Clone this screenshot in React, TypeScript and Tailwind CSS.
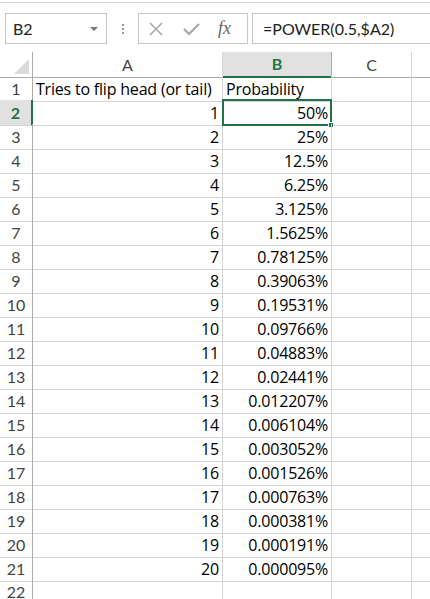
import React from "react";

const FONT = { fontFamily: "Lato, 'Liberation Sans', sans-serif" };
const CELL_FONT = { fontFamily: "'Open Sans', 'Noto Sans', sans-serif" };

const rows: [string, string][] = [
  ["Tries to flip head (or tail)", "Probability"],
  ["1", "50%"],
  ["2", "25%"],
  ["3", "12.5%"],
  ["4", "6.25%"],
  ["5", "3.125%"],
  ["6", "1.5625%"],
  ["7", "0.78125%"],
  ["8", "0.39063%"],
  ["9", "0.19531%"],
  ["10", "0.09766%"],
  ["11", "0.04883%"],
  ["12", "0.02441%"],
  ["13", "0.012207%"],
  ["14", "0.006104%"],
  ["15", "0.003052%"],
  ["16", "0.001526%"],
  ["17", "0.000763%"],
  ["18", "0.000381%"],
  ["19", "0.000191%"],
  ["20", "0.000095%"],
  ["", ""],
];

const cols = "grid-cols-[33px_190px_109px_80px_1fr]";

function FormulaBar() {
  return (
    <div className="h-[50px] border-t border-[#d4d4d4] mt-[2px] flex items-start pt-[10px] pl-[5px]">
      <div className="w-[102px] h-[31px] border border-[#c6c6c6] flex items-center justify-between pl-[7px] pr-[8px]">
        <span className="text-[16px] text-[#222]">B2</span>
        <svg width="8" height="4" viewBox="0 0 8 4">
          <path d="M0 0h8L4 4z" fill="#777" />
        </svg>
      </div>
      <div className="w-[31px] h-[31px] flex flex-col items-center justify-center gap-[2px]">
        <span className="w-[2px] h-[2px] bg-[#999]" />
        <span className="w-[2px] h-[2px] bg-[#999]" />
        <span className="w-[2px] h-[2px] bg-[#999]" />
      </div>
      <div className="w-[110px] h-[31px] border border-[#c6c6c6] flex items-center pl-[10px] gap-[20px]">
        <svg width="14" height="14" viewBox="0 0 14 14">
          <path d="M1 1l12 12M13 1L1 13" stroke="#a8a8a8" strokeWidth="1.6" />
        </svg>
        <svg width="17" height="14" viewBox="0 0 17 14">
          <path d="M1 7l5 5L16 2" stroke="#a8a8a8" strokeWidth="2.2" fill="none" />
        </svg>
        <span className="text-[18px] italic text-[#666] -ml-[2px]" style={{ fontFamily: "'Liberation Serif', serif" }}>
          fx
        </span>
      </div>
      <div className="flex-1 h-[31px] border-t border-b border-l border-[#c6c6c6] ml-[4px] flex items-center pl-[10px]">
        <span className="text-[16px] text-[#222]">=POWER(0.5,$A2)</span>
      </div>
    </div>
  );
}

function HeaderRow() {
  return (
    <div className={`grid ${cols} h-[24px]`}>
      <div className="border-r border-b border-[#ababab] relative">
        <svg className="absolute right-[3px] bottom-[3px]" width="15" height="15" viewBox="0 0 15 15">
          <path d="M15 0v15H0z" fill="#dadada" />
        </svg>
      </div>
      <div className="border-r border-[#d4d4d4] border-b border-b-[#ababab] flex items-center justify-center text-[16px] text-[#444]">A</div>
      <div className="bg-[#e1e1e1] border-r border-[#ababab] border-b-2 border-b-[#217346] flex items-center justify-center text-[16px] font-bold text-[#217346]">B</div>
      <div className="border-r border-[#d4d4d4] border-b border-b-[#ababab] flex items-center justify-center text-[16px] text-[#444]">C</div>
      <div className="border-b border-[#ababab]" />
    </div>
  );
}

export default function App() {
  return (
    <div className="w-[430px] h-[599px] overflow-hidden bg-white text-black" style={FONT}>
      <FormulaBar />
      <HeaderRow />
      {rows.map(([a, b], i) => {
        const n = i + 1;
        const sel = n === 2;
        const right = n > 1;
        return (
          <div key={n} className={`grid ${cols} h-[24px] text-[16px]`}>
            <div
              className={`flex items-center justify-center border-b border-[#d4d4d4] ${
                sel
                  ? "bg-[#e1e1e1] border-r-2 border-r-[#217346] font-bold text-[#217346]"
                  : "border-r border-r-[#ababab] text-[#444]"
              }`}
            >
              {n}
            </div>
            <div
              className={`flex items-center border-r border-b border-[#d4d4d4] px-[3px] pt-[1px] whitespace-nowrap text-[16px] tracking-[-0.2px] ${
                right ? "justify-end" : ""
              }`}
              style={CELL_FONT}
            >
              {a}
            </div>
            <div
              className={`relative flex items-center border-r border-b border-[#d4d4d4] px-[3px] pt-[1px] whitespace-nowrap text-[16px] tracking-[-0.2px] ${
                right ? "justify-end" : ""
              }`}
              style={CELL_FONT}
            >
              {b}
              {sel && (
                <div className="absolute -left-[1px] -top-[1px] -right-[1px] -bottom-[1px] border-2 border-[#217346]">
                  <div className="absolute -right-[4px] -bottom-[4px] w-[6px] h-[6px] bg-[#217346] border border-white" />
                </div>
              )}
            </div>
            <div className="border-r border-b border-[#d4d4d4]" />
            <div className="border-b border-[#d4d4d4]" />
          </div>
        );
      })}
    </div>
  );
}
